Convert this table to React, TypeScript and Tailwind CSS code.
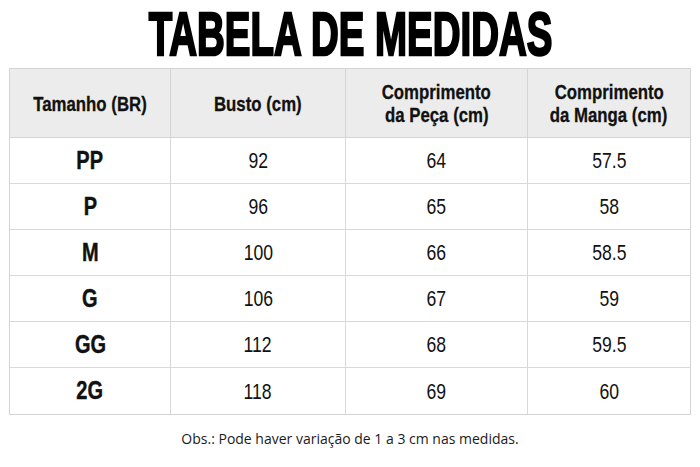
import React from "react";

const rows = [
  ["PP", "92", "64", "57.5"],
  ["P", "96", "65", "58"],
  ["M", "100", "66", "58.5"],
  ["G", "106", "67", "59"],
  ["GG", "112", "68", "59.5"],
  ["2G", "118", "69", "60"],
];

export default function App() {
  return (
    <div className="w-[700px] h-[467px] bg-white flex flex-col items-center text-[#111] font-['Liberation_Sans',Arial,sans-serif]">
      <h1 className="font-bold text-[62px] leading-[68px] scale-x-[0.62] [-webkit-text-stroke:2.5px_#000] whitespace-nowrap text-black">
        TABELA DE MEDIDAS
      </h1>
      <div className="w-[682px] border border-[#d4d4d4] grid grid-cols-[161px_175px_182px_1fr]">
        {[
          ["Tamanho (BR)"],
          ["Busto (cm)"],
          ["Comprimento", "da Peça (cm)"],
          ["Comprimento", "da Manga (cm)"],
        ].map((h, i) => (
          <div
            key={i}
            className={`h-[69px] bg-[#ececec] flex flex-col items-center justify-center font-bold text-[21px] leading-[23px] border-b border-[#d4d4d4] ${i < 3 ? "border-r" : ""}`}
          >
            {h.map((l, j) => (
              <span key={j} className="inline-block scale-x-[0.8] whitespace-nowrap [-webkit-text-stroke:0.3px_#111]">
                {l}
              </span>
            ))}
          </div>
        ))}
        {rows.map((r, ri) =>
          r.map((c, ci) => (
            <div
              key={`${ri}-${ci}`}
              className={`h-[46px] flex items-center justify-center border-[#d9d9d9] ${ci < 3 ? "border-r" : ""} ${ri < rows.length - 1 ? "border-b" : ""} ${ci === 0 ? "font-bold text-[25px] [-webkit-text-stroke:0.4px_#111]" : "text-[22px]"}`}
            >
              <span className="inline-block scale-x-[0.8]">{c}</span>
            </div>
          ))
        )}
      </div>
      <div className="mt-[14px] font-['Open_Sans',sans-serif] text-[14px] leading-[20px] whitespace-nowrap text-[#1a1a1a]">
        Obs.: Pode haver variação de 1 a 3 cm nas medidas.
      </div>
    </div>
  );
}
